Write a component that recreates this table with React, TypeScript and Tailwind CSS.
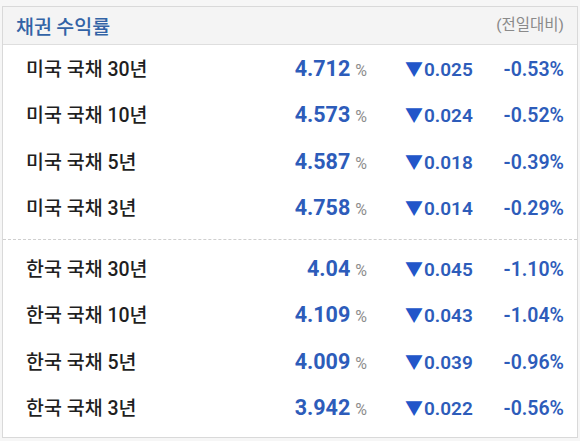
import React from "react";

type Row = { name: string; value: string; delta: string; change: string };

const us: Row[] = [
  { name: "미국 국채 30년", value: "4.712", delta: "0.025", change: "-0.53%" },
  { name: "미국 국채 10년", value: "4.573", delta: "0.024", change: "-0.52%" },
  { name: "미국 국채 5년", value: "4.587", delta: "0.018", change: "-0.39%" },
  { name: "미국 국채 3년", value: "4.758", delta: "0.014", change: "-0.29%" },
];

const kr: Row[] = [
  { name: "한국 국채 30년", value: "4.04", delta: "0.045", change: "-1.10%" },
  { name: "한국 국채 10년", value: "4.109", delta: "0.043", change: "-1.04%" },
  { name: "한국 국채 5년", value: "4.009", delta: "0.039", change: "-0.96%" },
  { name: "한국 국채 3년", value: "3.942", delta: "0.022", change: "-0.56%" },
];

function BondRow({ r }: { r: Row }) {
  return (
    <div className="flex items-baseline h-[46.33px] pt-[13px] pl-[23px] pr-[13px]">
      <div className="flex-1 text-[19.5px] leading-none font-medium text-[#1f1f1f]">{r.name}</div>
      <div className="w-[117px] flex items-baseline justify-end">
        <span className="text-[21.5px] leading-none font-bold text-[#2d5cba]">{r.value}</span>
        <span className="ml-[5px] text-[16px] leading-none text-[#8d8d8d]">%</span>
      </div>
      <div className="ml-[38px] w-[75px] flex items-baseline">
        <span className="text-[18px] leading-none font-medium text-[#2256c9] mr-[1px]">▼</span>
        <span className="text-[19px] leading-none font-semibold text-[#2d5cba]">{r.delta}</span>
      </div>
      <div className="w-[84px] text-right text-[19.5px] leading-none font-semibold text-[#2d5cba]">{r.change}</div>
    </div>
  );
}

export default function App() {
  return (
    <div
      className="w-[580px] h-[441px] bg-[#f6f6f6] pt-[6px] pl-[2px]"
      style={{ fontFamily: "Roboto, 'Noto Sans CJK KR', sans-serif" }}
    >
      <div className="w-[576px] h-[432px] border border-[#d9d9d9] bg-white">
        <div className="h-[38px] bg-[#f4f4f4] border-b border-[#dedede] flex items-center justify-between pl-[13px] pr-[13px]">
          <span className="text-[19.5px] font-medium text-[#3263a6] leading-none" style={{ fontFamily: "'Noto Sans CJK KR', sans-serif" }}>채권 수익률</span>
          <span className="text-[15.5px] text-[#8a8a8a] leading-none">(전일대비)</span>
        </div>
        <div className="h-[195px] border-b border-dashed border-[#cfcfcf]">
          {us.map((r) => (
            <BondRow key={r.name} r={r} />
          ))}
        </div>
        <div className="pt-[5px]">
          {kr.map((r) => (
            <BondRow key={r.name} r={r} />
          ))}
        </div>
      </div>
    </div>
  );
}
